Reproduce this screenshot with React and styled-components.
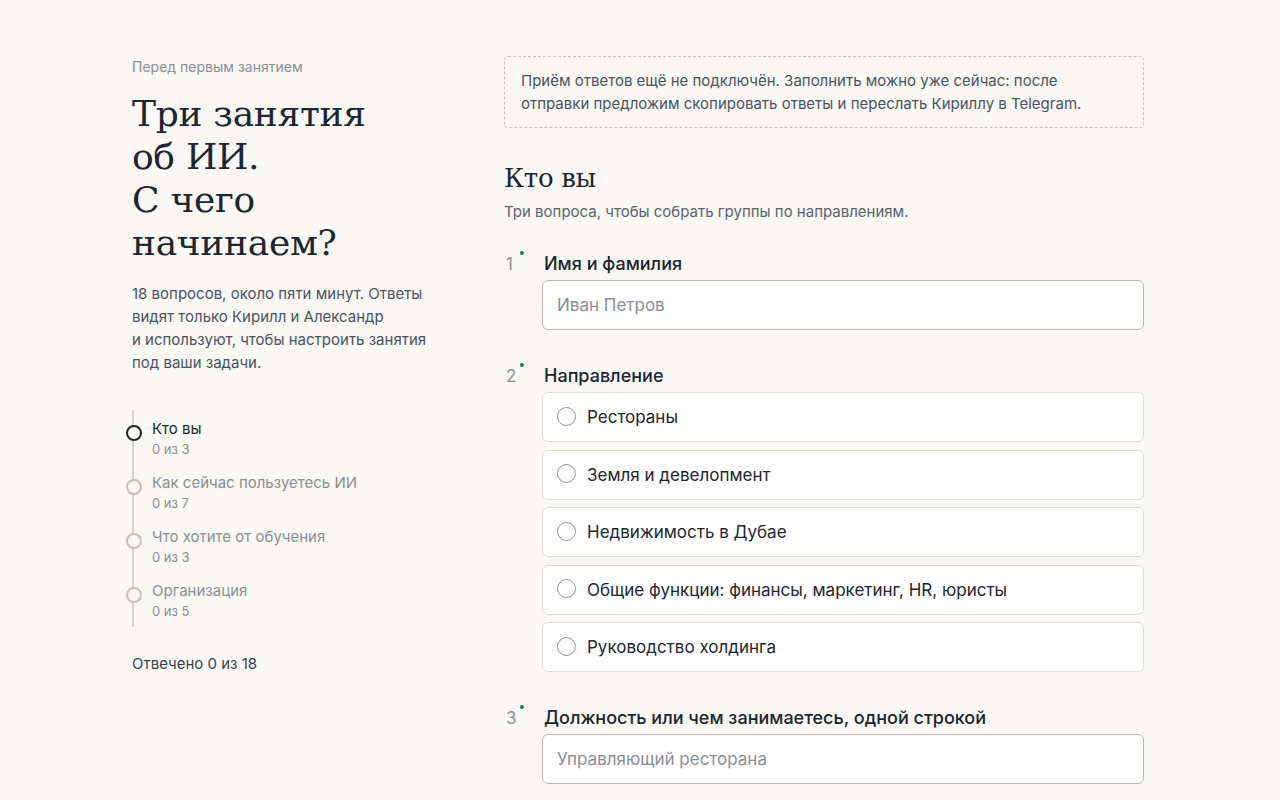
import React from "react";
import styled, { createGlobalStyle } from "styled-components";

const Global = createGlobalStyle`
  html, body { margin: 0; padding: 0; background: #f9f8f5; }
  body { font-family: Inter, "Noto Sans", sans-serif; color: #1c2530; -webkit-font-smoothing: antialiased; }
  * { box-sizing: border-box; }
`;

const Page = styled.div`
  display: grid;
  grid-template-columns: 300px 640px;
  column-gap: 72px;
  padding: 56px 0 40px 132px;
  align-items: start;
`;

const Side = styled.aside`
  display: flex;
  flex-direction: column;
`;

const Eyebrow = styled.div`
  font-size: 14px;
  line-height: 22px;
  color: #8a8e94;
`;

const Title = styled.h1`
  margin: 13.5px 0 0;
  font-family: "DejaVu Serif", "Liberation Serif", serif;
  font-weight: 400;
  font-size: 36px;
  line-height: 43px;
  letter-spacing: -0.3px;
  color: #1c2530;
`;

const Lead = styled.p`
  margin: 18px 0 0;
  font-size: 15px;
  line-height: 23px;
  color: #4a5260;
`;

const Steps = styled.ul`
  list-style: none;
  margin: 36.5px 0 0;
  padding: 9px 0 6px;
  position: relative;
  display: flex;
  flex-direction: column;
  gap: 14px;
  &::before {
    content: "";
    position: absolute;
    left: 0;
    top: 0;
    bottom: 0;
    width: 2px;
    background: #d6d1c8;
  }
`;

const Step = styled.li`
  position: relative;
  padding-left: 20px;
  display: flex;
  flex-direction: column;
`;

const StepDot = styled.span`
  position: absolute;
  left: -6px;
  top: 6px;
  width: 16px;
  height: 16px;
  border-radius: 50%;
  background: #f9f8f5;
  border: 2px solid ${(p) => (p.$active ? "#1c2530" : "#c7c0b4")};
`;

const StepTitle = styled.span`
  font-size: 15px;
  line-height: 20px;
  color: ${(p) => (p.$active ? "#1c2530" : "#8a8e94")};
`;

const StepCount = styled.span`
  font-size: 13px;
  line-height: 20px;
  color: #8a8e94;
`;

const Answered = styled.div`
  margin-top: 26px;
  font-size: 15px;
  line-height: 22px;
  color: #3a4250;
`;

const Main = styled.main`
  display: flex;
  flex-direction: column;
`;

const Notice = styled.div`
  border: 1px dashed #c6c1b8;
  border-radius: 4px;
  padding: 12px 16px;
  font-size: 15px;
  line-height: 23px;
  color: #4a5260;
`;

const SectionTitle = styled.h2`
  margin: 32px 0 0;
  font-family: "DejaVu Serif", "Liberation Serif", serif;
  font-weight: 400;
  font-size: 26px;
  line-height: 36px;
  letter-spacing: -0.3px;
  color: #1c2530;
`;

const SectionSub = styled.p`
  margin: 5px 0 0;
  font-size: 15px;
  line-height: 22px;
  color: #5a6270;
`;

const Questions = styled.div`
  margin-top: 29px;
  display: flex;
  flex-direction: column;
  gap: 34px;
`;

const Question = styled.div`
  display: grid;
  grid-template-columns: 38px 1fr;
  row-gap: 4px;
`;

const Num = styled.span`
  position: relative;
  font-size: 17px;
  line-height: 24px;
  color: #8a8e94;
  padding-left: 2px;
  &::after {
    content: "";
    position: absolute;
    left: 16px;
    top: -1px;
    width: 4px;
    height: 4px;
    border-radius: 50%;
    background: #1f7a55;
  }
`;

const Label = styled.label`
  font-size: 18px;
  line-height: 24px;
  font-weight: 500;
  color: #1c2530;
  padding-left: 2px;
`;

const Field = styled.input`
  grid-column: 2;
  height: 50px;
  width: 100%;
  border: 1px solid #bdb8ae;
  border-radius: 6px;
  background: #fff;
  padding: 0 14px;
  font-family: inherit;
  font-size: 17px;
  color: #1c2530;
  outline: none;
  &::placeholder { color: #8a8e94; }
`;

const Options = styled.div`
  grid-column: 2;
  display: flex;
  flex-direction: column;
  gap: 7.5px;
`;

const Option = styled.label`
  height: 50px;
  display: flex;
  align-items: center;
  gap: 11px;
  padding: 0 14px;
  background: #fff;
  border: 1px solid #e2ded6;
  border-radius: 6px;
  font-size: 17px;
  color: #1c2530;
`;

const Radio = styled.span`
  width: 19px;
  height: 19px;
  border-radius: 50%;
  border: 1.5px solid #8f9297;
  background: #fff;
  flex: none;
  margin-top: -2px;
`;

const steps = [
  { t: "Кто вы", c: "0 из 3", active: true },
  { t: "Как сейчас пользуетесь ИИ", c: "0 из 7" },
  { t: "Что хотите от обучения", c: "0 из 3" },
  { t: "Организация", c: "0 из 5" },
];

const directions = [
  "Рестораны",
  "Земля и девелопмент",
  "Недвижимость в Дубае",
  "Общие функции: финансы, маркетинг, HR, юристы",
  "Руководство холдинга",
];

export default function App() {
  return (
    <>
      <Global />
      <Page>
        <Side>
          <Eyebrow>Перед первым занятием</Eyebrow>
          <Title>
            Три занятия
            <br />
            об ИИ.
            <br />
            С чего
            <br />
            начинаем?
          </Title>
          <Lead>
            18 вопросов, около пяти минут. Ответы
            <br />
            видят только Кирилл и Александр
            <br />и используют, чтобы настроить занятия
            <br />
            под ваши задачи.
          </Lead>
          <Steps>
            {steps.map((s) => (
              <Step key={s.t}>
                <StepDot $active={s.active} />
                <StepTitle $active={s.active}>{s.t}</StepTitle>
                <StepCount>{s.c}</StepCount>
              </Step>
            ))}
          </Steps>
          <Answered>Отвечено 0 из 18</Answered>
        </Side>
        <Main>
          <Notice>
            Приём ответов ещё не подключён. Заполнить можно уже сейчас: после
            <br />
            отправки предложим скопировать ответы и переслать Кириллу в Telegram.
          </Notice>
          <SectionTitle>Кто вы</SectionTitle>
          <SectionSub>Три вопроса, чтобы собрать группы по направлениям.</SectionSub>
          <Questions>
            <Question>
              <Num>1</Num>
              <Label>Имя и фамилия</Label>
              <Field placeholder="Иван Петров" />
            </Question>
            <Question>
              <Num>2</Num>
              <Label>Направление</Label>
              <Options>
                {directions.map((d) => (
                  <Option key={d}>
                    <Radio />
                    {d}
                  </Option>
                ))}
              </Options>
            </Question>
            <Question>
              <Num>3</Num>
              <Label>Должность или чем занимаетесь, одной строкой</Label>
              <Field placeholder="Управляющий ресторана" />
            </Question>
          </Questions>
        </Main>
      </Page>
    </>
  );
}
